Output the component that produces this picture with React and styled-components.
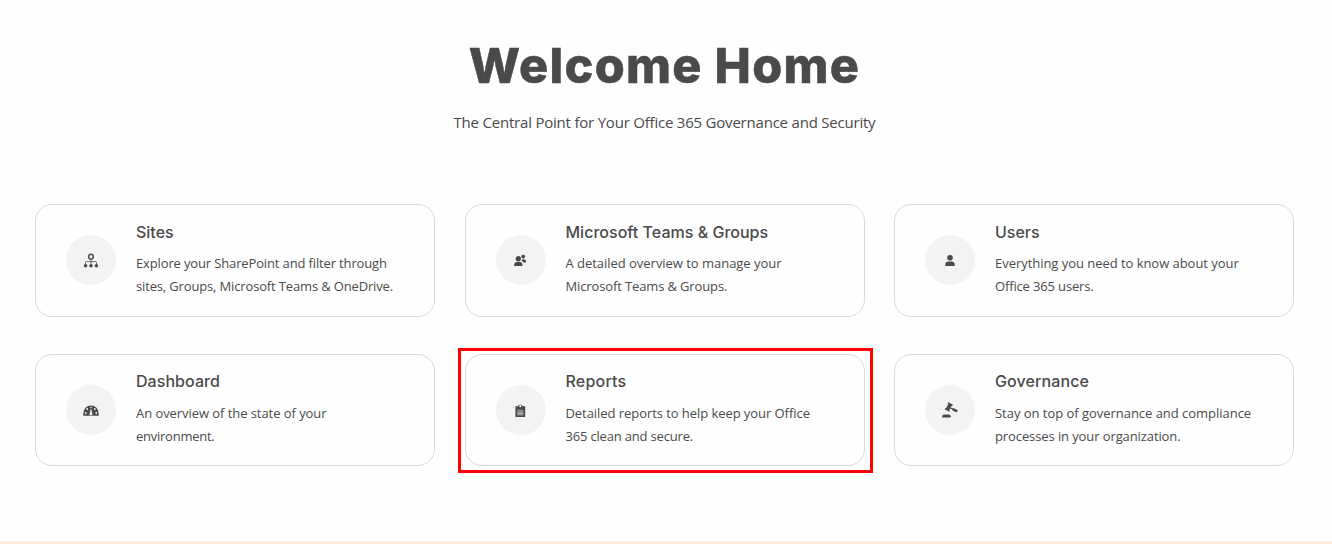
import React from "react";
import styled, { createGlobalStyle } from "styled-components";

const GlobalStyle = createGlobalStyle`
  * { box-sizing: border-box; }
  html, body { margin: 0; background: #fefefe; }
  body { color: #4a4a4c; font-family: "Open Sans", "Noto Sans", sans-serif; overflow: hidden; }
`;

const Page = styled.div`
  display: flex;
  flex-direction: column;
  width: 1332px;
  height: 544px;
`;

const Hero = styled.header`
  display: flex;
  flex-direction: column;
  align-items: center;
  height: 204px;
  padding: 36px 3px 0 0;
`;

const Heading = styled.h1`
  margin: 0;
  font: 800 48.5px/60px Inter, sans-serif;
  letter-spacing: 1.3px;
  -webkit-text-stroke: 0.5px #4a4a4c;
  white-space: nowrap;
`;

const Tagline = styled.p`
  margin: 15px 0 0;
  font-size: 15px;
  line-height: 22px;
  letter-spacing: -0.21px;
  white-space: nowrap;
`;

const CardGrid = styled.main`
  display: grid;
  grid-template-columns: repeat(3, 400px);
  grid-auto-rows: 112.5px;
  gap: 37px 29.5px;
  padding-left: 35px;
  flex: 1;
  align-content: start;
`;

const Card = styled.article`
  position: relative;
  display: flex;
  gap: 20px;
  padding: 0 20px 0 30px;
  border: 1px solid #dadada;
  border-radius: 17px;
`;

const Highlight = styled.div`
  position: absolute;
  inset: -6.5px -9px -8px -7.5px;
  border: 3px solid #ff0000;
  pointer-events: none;
`;

const IconDisc = styled.div`
  flex: none;
  width: 50px;
  height: 50px;
  margin-top: 30px;
  border-radius: 50%;
  background: #f3f3f3;

  svg { display: block; }
`;

const CardText = styled.div`
  padding-top: 15.7px;
`;

const CardTitle = styled.h2`
  margin: 0 0 9.6px;
  font: 500 16px/22px Inter, sans-serif;
  letter-spacing: ${({ $tracking }) => $tracking}px;
  white-space: nowrap;
`;

const Line = styled.div`
  font-size: 13px;
  line-height: 23px;
  letter-spacing: ${({ $tracking }) => $tracking}px;
  white-space: nowrap;
`;

const Footer = styled.footer`
  height: 3px;
  background: #ffeedd;
`;

const Glyph = ({ children }) => (
  <svg width="50" height="50" viewBox="0 0 50 50" fill="#4a4a4c">{children}</svg>
);

const SitesIcon = () => (
  <Glyph>
    <circle cx="25" cy="21.7" r="2.4" fill="none" stroke="#4a4a4c" strokeWidth="1.4" />
    <path d="M25 24.2v5M19.5 29.5v-1.9q0-1 1-1h9q1 0 1 1v1.9" fill="none" stroke="#4a4a4c" strokeWidth=".8" />
    <circle cx="19.6" cy="30.7" r="1.8" /><circle cx="25" cy="30.7" r="1.8" /><circle cx="30.4" cy="30.7" r="1.8" />
  </Glyph>
);

const TeamsIcon = () => (
  <Glyph>
    <circle cx="22.3" cy="23.7" r="2.6" />
    <path d="M18.2 31v-1.3q0-3 4.1-3t4.1 3V31z" />
    <circle cx="27.2" cy="21.6" r="1.9" />
    <path d="M25.6 25q1-.7 1.8-.7 2.7 0 2.7 2.2v1h-2.9q-.4-.9-1.4-1.4z" />
  </Glyph>
);

const UsersIcon = () => (
  <Glyph>
    <circle cx="25" cy="22.7" r="2.8" />
    <path d="M20.2 31v-1.1q0-3.4 3.6-3.4h2.4q3.6 0 3.6 3.4V31z" />
  </Glyph>
);

const DashboardIcon = () => (
  <Glyph>
    <path d="M17.3 30.8v-2.5a7.7 7.9 0 0 1 15.4 0v2.5z" />
    <g fill="#f3f3f3">
      <circle cx="25" cy="22.5" r=".8" /><circle cx="21.2" cy="24" r=".9" /><circle cx="28.8" cy="24" r=".9" />
      <circle cx="19.7" cy="28" r=".9" /><circle cx="30.3" cy="28" r=".9" />
      <path d="M24.6 24.3h.8l.6 3.4q.4.5.4 1.2 0 .9-.6 1.4h-1.6q-.6-.5-.6-1.4 0-.7.4-1.2z" />
    </g>
  </Glyph>
);

const ReportsIcon = () => (
  <Glyph>
    <path d="M19.4 21.3h2.4a2.7 2.7 0 0 1 5 0h2.4V32h-9.8z" />
    <circle cx="24.3" cy="21.2" r="1.1" fill="#f3f3f3" />
    <path d="M21.3 24.7h6v5.8h-6z" fill="#8c8c8e" />
    <path d="M21.3 28.6h6" stroke="#cfcfcf" strokeWidth=".8" />
  </Glyph>
);

const GovernanceIcon = () => (
  <Glyph>
    <g transform="translate(23.8 22) rotate(28)">
      <path d="M-2.6-4h5.2v1.5h-.7v5h.7V4h-5.2V2.5h.7v-5h-.7z" />
      <path d="M1.5-.6h3v-.7h5v2.6h-5V.6h-3z" />
    </g>
    <path d="M17.2 32.4v-.8q0-2 2-2h4.6q2 0 2 2v.8z" />
  </Glyph>
);

const cards = [
  { title: "Sites", tracking: 0, Icon: SitesIcon, lines: [["Explore your SharePoint and filter through", -0.14], ["sites, Groups, Microsoft Teams & OneDrive.", -0.15]] },
  { title: "Microsoft Teams & Groups", tracking: 0.02, Icon: TeamsIcon, lines: [["A detailed overview to manage your", -0.03], ["Microsoft Teams & Groups.", -0.13]] },
  { title: "Users", tracking: 0, Icon: UsersIcon, lines: [["Everything you need to know about your", -0.04], ["Office 365 users.", -0.15]] },
  { title: "Dashboard", tracking: 0.06, Icon: DashboardIcon, lines: [["An overview of the state of your", -0.06], ["environment.", -0.25]] },
  { title: "Reports", tracking: 0.2, Icon: ReportsIcon, highlighted: true, lines: [["Detailed reports to help keep your Office", -0.06], ["365 clean and secure.", -0.18]] },
  { title: "Governance", tracking: 0.1, Icon: GovernanceIcon, lines: [["Stay on top of governance and compliance", -0.03], ["processes in your organization.", -0.1]] },
];

export default function App() {
  return (
    <Page>
      <GlobalStyle />
      <Hero>
        <Heading>Welcome Home</Heading>
        <Tagline>The Central Point for Your Office 365 Governance and Security</Tagline>
      </Hero>
      <CardGrid>
        {cards.map(({ title, tracking, Icon, lines, highlighted }) => (
          <Card key={title}>
            <IconDisc><Icon /></IconDisc>
            <CardText>
              <CardTitle $tracking={tracking}>{title}</CardTitle>
              {lines.map(([text, spacing]) => (
                <Line key={text} $tracking={spacing}>{text}</Line>
              ))}
            </CardText>
            {highlighted && <Highlight />}
          </Card>
        ))}
      </CardGrid>
      <Footer />
    </Page>
  );
}
